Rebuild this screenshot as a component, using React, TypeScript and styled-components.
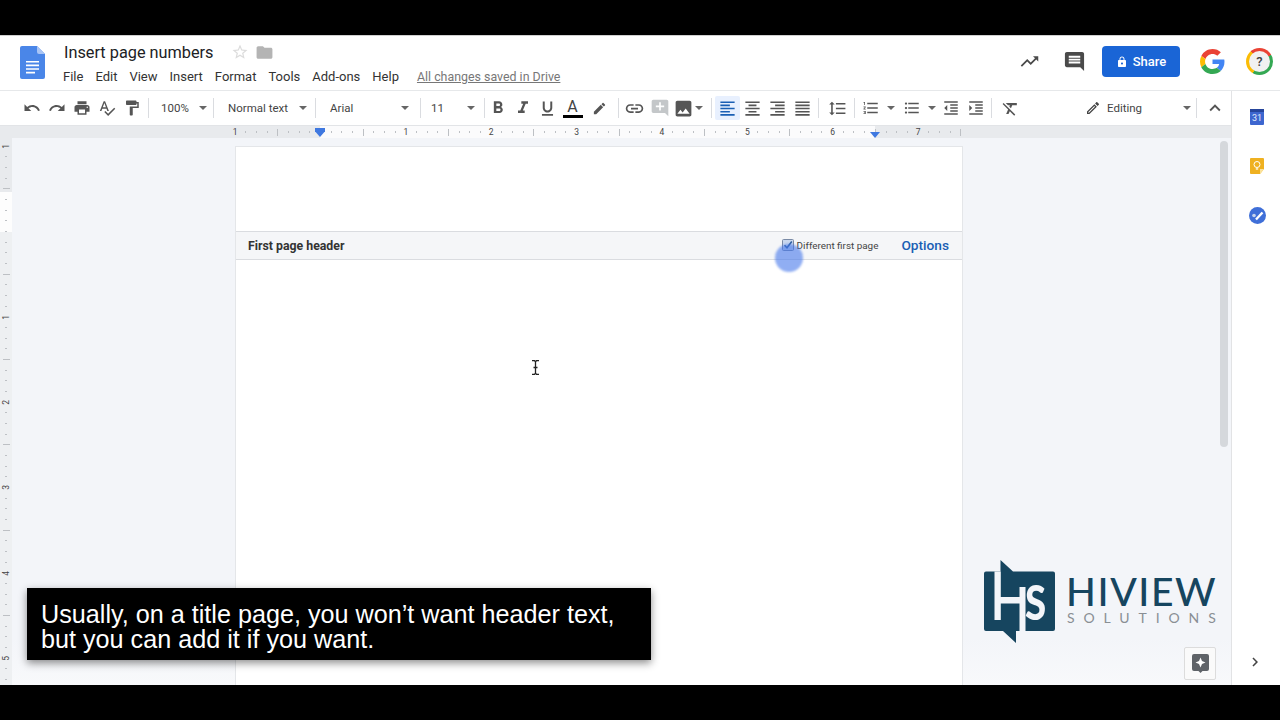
import React from "react";
import styled, { createGlobalStyle } from "styled-components";
import {
  MdUndo,
  MdRedo,
  MdPrint,
  MdSpellcheck,
  MdFormatPaint,
  MdFormatBold,
  MdFormatItalic,
  MdFormatUnderlined,
  MdEdit,
  MdLink,
  MdAddComment,
  MdImage,
  MdFormatAlignLeft,
  MdFormatAlignCenter,
  MdFormatAlignRight,
  MdFormatAlignJustify,
  MdFormatLineSpacing,
  MdFormatListNumbered,
  MdFormatListBulleted,
  MdFormatIndentDecrease,
  MdFormatIndentIncrease,
  MdFormatClear,
  MdOutlineEdit,
  MdKeyboardArrowUp,
  MdTrendingUp,
  MdComment,
  MdLock,
  MdStarBorder,
  MdFolder,
  MdChevronRight,
} from "react-icons/md";

const GlobalStyle = createGlobalStyle`
  html, body {
    margin: 0;
    padding: 0;
    background: #000;
    overflow: hidden;
  }
  * { box-sizing: border-box; }
`;

const CELL = 10.675;
const MENU = ["File", "Edit", "View", "Insert", "Format", "Tools", "Add-ons", "Help"];

function DocsIcon() {
  return (
    <svg width="25" height="33" viewBox="0 0 25 33">
      <path d="M2 0h15l8 8v23a2 2 0 0 1-2 2H2a2 2 0 0 1-2-2V2a2 2 0 0 1 2-2z" fill="#4a86e8" />
      <path d="M17 0l8 8h-6a2 2 0 0 1-2-2z" fill="#a9c5f5" />
      <path d="M6 15h13v1.6H6zM6 18.6h13v1.6H6zM6 22.2h13v1.6H6zM6 25.8h9v1.6H6z" fill="#fff" />
    </svg>
  );
}

function GoogleG() {
  return (
    <svg width="25" height="25" viewBox="0 0 48 48">
      <path fill="#EA4335" d="M24 9.5c3.5 0 6.7 1.2 9.2 3.6l6.9-6.9C35.9 2.4 30.5 0 24 0 14.6 0 6.5 5.4 2.6 13.2l8 6.2C12.4 13.7 17.7 9.5 24 9.5z" />
      <path fill="#4285F4" d="M47 24.5c0-1.6-.1-3.100-.4-4.500H24v9h12.900c-.6 3-2.200 5.500-4.700 7.200l7.700 6C44.400 37.600 47 31.600 47 24.500z" />
      <path fill="#FBBC05" d="M10.500 28.600c-.5-1.400-.8-3-.8-4.600s.3-3.200.8-4.600l-8-6.200C.9 16.500 0 20.100 0 24s.9 7.500 2.600 10.800l7.900-6.200z" />
      <path fill="#34A853" d="M24 48c6.500 0 11.900-2.100 15.900-5.800l-7.700-6c-2.100 1.400-4.900 2.300-8.200 2.300-6.300 0-11.600-4.200-13.500-9.900l-8 6.200C6.500 42.600 14.600 48 24 48z" />
    </svg>
  );
}

function LogoMark() {
  return (
    <svg width="72" height="84" viewBox="0 0 72 84">
      <path d="M2 11.500h14.500V0L29 11.500h40a2 2 0 0 1 2 2v55.500a2 2 0 0 1-2 2H32v12L19 71H2a2 2 0 0 1-2-2V13.500a2 2 0 0 1 2-2z" fill="#16455f" />
      <path d="M10.500 11.500h6.300v25.500h18.700V27h6v44h-6V43.500H16.800V60H10.500z" fill="#f3f5f9" />
    </svg>
  );
}

function ToolIcon({ icon: Icon, size = 18 }: { icon: React.ComponentType<{ size?: number }>; size?: number }) {
  return (
    <ToolBtn>
      <Icon size={size} />
    </ToolBtn>
  );
}

function Select({ label, width, pad, end }: { label: string; width: number; pad: number; end: number }) {
  return (
    <SelectBox $w={width} $pad={pad} $end={end}>
      <span>{label}</span>
      <Caret />
    </SelectBox>
  );
}

function HRuler() {
  const cells = Array.from({ length: 69 }, (_, i) => i);
  return (
    <RulerBar>
      <RulerCells>
        {cells.map((i) => {
          const n = i - 8;
          if (i === 8) return <HCell key={i} />;
          if (i % 8 === 0) return <HCell key={i}>{n === -8 ? 1 : n / 8}</HCell>;
          return (
            <HCell key={i}>
              <HTick $long={i % 8 === 4} />
            </HCell>
          );
        })}
      </RulerCells>
      <IndentLeft />
      <IndentRight />
    </RulerBar>
  );
}

function VRuler() {
  const labels: Record<number, number> = { 0: 1, 16: 1, 24: 2, 32: 3, 40: 4, 48: 5 };
  const cells = Array.from({ length: 52 }, (_, i) => i);
  return (
    <VRulerCol>
      <VHeaderGap />
      {cells.map((i) => (
        <VCell key={i}>
          {labels[i] ? <VDigit>{labels[i]}</VDigit> : <VTick $long={i % 8 === 4} />}
        </VCell>
      ))}
    </VRulerCol>
  );
}

export default function App() {
  return (
    <>
      <GlobalStyle />
      <Screen>
        <Letterbox />
        <Stage>
          <TitleBar>
            <DocsIcon />
            <TitleCol>
              <TitleRow>
                <DocTitle>Insert page numbers</DocTitle>
                <StarIcon><MdStarBorder size={18} /></StarIcon>
                <FolderIcon><MdFolder size={19} /></FolderIcon>
              </TitleRow>
              <MenuRow>
                {MENU.map((m) => (
                  <MenuItem key={m}>{m}</MenuItem>
                ))}
                <SaveStatus>All changes saved in Drive</SaveStatus>
              </MenuRow>
            </TitleCol>
            <TopRight>
              <TopIcon $mr={23}><MdTrendingUp size={21} /></TopIcon>
              <TopIcon $mr={16}><MdComment size={23} /></TopIcon>
              <ShareBtn>
                <MdLock size={12} />
                Share
              </ShareBtn>
              <GoogleSlot><GoogleG /></GoogleSlot>
              <HelpRing><HelpInner>?</HelpInner></HelpRing>
            </TopRight>
          </TitleBar>

          <Body>
            <Work>
              <Toolbar>
                <ToolIcon icon={MdUndo} />
                <ToolIcon icon={MdRedo} />
                <ToolIcon icon={MdPrint} />
                <ToolIcon icon={MdSpellcheck} />
                <ToolIcon icon={MdFormatPaint} />
                <Sep $l={4} />
                <Select label="100%" width={58} pad={9} end={3} />
                <Sep />
                <Select label="Normal text" width={95} pad={11} end={5} />
                <Sep />
                <Select label="Arial" width={98} pad={11} end={8} />
                <Sep />
                <Select label="11" width={57} pad={7} end={6} />
                <Sep $r={0} />
                <ToolBtn><MdFormatBold size={20} /></ToolBtn>
                <ToolIcon icon={MdFormatItalic} size={20} />
                <ToolIcon icon={MdFormatUnderlined} size={19} />
                <ToolBtn><ColorA>A</ColorA></ToolBtn>
                <ToolBtn $ml={2}><MdEdit size={15} /></ToolBtn>
                <Sep $l={6} />
                <ToolIcon icon={MdLink} size={21} />
                <ToolBtn $faded><MdAddComment size={20} /></ToolBtn>
                <ToolBtn $w={23}><MdImage size={21} /></ToolBtn>
                <Caret />
                <Sep $l={8} />
                <ToolBtn $active><MdFormatAlignLeft size={19} /></ToolBtn>
                <ToolIcon icon={MdFormatAlignCenter} size={19} />
                <ToolIcon icon={MdFormatAlignRight} size={19} />
                <ToolIcon icon={MdFormatAlignJustify} size={19} />
                <Sep />
                <ToolBtn $w={30}><MdFormatLineSpacing size={19} /></ToolBtn>
                <Sep $l={2} />
                <ToolIcon icon={MdFormatListNumbered} size={18} />
                <Caret $ml={4} />
                <ToolBtn $ml={4}><MdFormatListBulleted size={18} /></ToolBtn>
                <Caret $ml={4} />
                <ToolBtn $ml={3} $w={24}><MdFormatIndentDecrease size={18} /></ToolBtn>
                <ToolIcon icon={MdFormatIndentIncrease} size={18} />
                <Sep />
                <ToolBtn $w={30}><MdFormatClear size={19} /></ToolBtn>
                <ModeBox>
                  <MdOutlineEdit size={16} />
                  <span>Editing</span>
                  <Caret />
                </ModeBox>
                <Sep />
                <ToolBtn $w={30}><MdKeyboardArrowUp size={22} /></ToolBtn>
              </Toolbar>
              <HRuler />
              <Canvas>
                <VRuler />
                <Page>
                  <HeaderSpace />
                  <HeaderBar>
                    <HeaderLabel>First page header</HeaderLabel>
                    <CheckLabel>
                      <CheckBox viewBox="0 0 12 12">
                        <rect x="0.5" y="0.5" width="11" height="11" rx="1" fill="#c9d7ee" stroke="#7a8aa5" />
                        <path d="M2.500 6.200l2.500 2.600 4.800-6.300" fill="none" stroke="#2f5f9f" strokeWidth="1.600" />
                      </CheckBox>
                      Different first page
                    </CheckLabel>
                    <OptionsLink>Options</OptionsLink>
                  </HeaderBar>
                </Page>
                <ScrollThumb />
                <ClickDot />
                <IBeam>
                  <svg width="7" height="15" viewBox="0 0 7 15">
                    <path d="M0 .7h2.500L3.500 1.700 4.500.7H7M3.500 1.700v11.600M0 14.300h2.500l1-1 1 1H7M1.500 7.500h4" fill="none" stroke="#222" strokeWidth="1.300" />
                  </svg>
                </IBeam>
                <ExploreBtn>
                  <svg width="17" height="19" viewBox="0 0 17 19">
                    <path d="M2 0h13a2 2 0 0 1 2 2v13a2 2 0 0 1-2 2h-4.500L8.500 19l-2-2H2a2 2 0 0 1-2-2V2a2 2 0 0 1 2-2z" fill="#5f6368" />
                    <path d="M8.500 3.500l1.500 3.500 3.500 1.500-3.500 1.500-1.500 3.500L7 10 3.500 8.500 7 7z" fill="#fff" />
                  </svg>
                </ExploreBtn>
              </Canvas>
            </Work>
            <SidePanel>
              <SideApps>
                <CalendarIcon>
                  <CalendarTop />
                  <CalendarDay>31</CalendarDay>
                </CalendarIcon>
                <svg width="14" height="16" viewBox="0 0 14 16">
                  <path d="M1 0h12a1 1 0 0 1 1 1v10l-4 5H1a1 1 0 0 1-1-1V1a1 1 0 0 1 1-1z" fill="#efb121" />
                  <path d="M10 16v-5h4z" fill="#fbe29a" />
                  <circle cx="7" cy="6.500" r="3" fill="none" stroke="#fff" strokeWidth="1" />
                  <path d="M5.800 10.300h2.400v1.300H5.800z" fill="#fff" />
                </svg>
                <svg width="17" height="17" viewBox="0 0 17 17">
                  <circle cx="8.500" cy="8.500" r="8.500" fill="#3f6fd8" />
                  <path d="M7 12.500l6.500-7" stroke="#fff" strokeWidth="2.400" />
                  <circle cx="5" cy="8.500" r="1.800" fill="#c6d3ea" />
                </svg>
              </SideApps>
              <SideToggle><MdChevronRight size={18} /></SideToggle>
            </SidePanel>
          </Body>

          <Caption>
            Usually, on a title page, you won’t want header text,
            <br />
            but you can add it if you want.
          </Caption>
          <Brand>
            <LogoWrap>
              <LogoMark />
              <LogoS>S</LogoS>
            </LogoWrap>
            <BrandText>
              <BrandName>HIVIEW</BrandName>
              <BrandSub>SOLUTIONS</BrandSub>
            </BrandText>
          </Brand>
        </Stage>
        <Letterbox />
      </Screen>
    </>
  );
}

const Screen = styled.div`
  width: 1280px;
  height: 720px;
  display: flex;
  flex-direction: column;
  background: #000;
  font-family: Roboto, "Liberation Sans", sans-serif;
  overflow: hidden;
`;

const Letterbox = styled.div`
  height: 35px;
  flex: none;
  background: #000;
`;

const Stage = styled.div`
  position: relative;
  height: 650px;
  display: flex;
  flex-direction: column;
  background: #fff;
  overflow: hidden;
`;

const TitleBar = styled.header`
  height: 56px;
  flex: none;
  display: flex;
  align-items: flex-start;
  padding: 10px 0 0 20px;
  border-top: 1px solid #cfcfcf;
  border-bottom: 1px solid #e6e8ea;
  background: #fff;
`;

const TitleCol = styled.div`
  display: flex;
  flex-direction: column;
  margin-left: 18px;
  margin-top: -5px;
`;

const TitleRow = styled.div`
  display: flex;
  align-items: center;
  height: 22px;
`;

const DocTitle = styled.div`
  font-size: 16.300px;
  color: #202124;
  margin-left: 1px;
`;

const StarIcon = styled.span`
  display: flex;
  margin-left: 17px;
  color: #dcdcdc;
`;

const FolderIcon = styled.span`
  display: flex;
  margin-left: 6px;
  color: #b4b4b4;
`;

const MenuRow = styled.nav`
  display: flex;
  align-items: center;
  height: 20px;
  margin-top: 3px;
  gap: 12px;
`;

const MenuItem = styled.span`
  font-size: 13px;
  color: #333;
`;

const SaveStatus = styled.span`
  margin-left: 6px;
  font-size: 12.400px;
  color: #777;
  text-decoration: underline;
`;

const TopRight = styled.div`
  margin-left: auto;
  display: flex;
  align-items: center;
  height: 31px;
`;

const TopIcon = styled.span<{ $mr: number }>`
  display: flex;
  margin-right: ${(p) => p.$mr}px;
  color: #4a4a4a;
`;

const ShareBtn = styled.button`
  width: 78px;
  height: 31px;
  display: flex;
  align-items: center;
  justify-content: center;
  gap: 5px;
  border: none;
  border-radius: 4px;
  background: #1a65d6;
  color: #fff;
  font-family: Roboto, sans-serif;
  font-size: 13px;
  font-weight: 500;
`;

const GoogleSlot = styled.span`
  display: flex;
  margin-left: 20px;
`;

const HelpRing = styled.div`
  width: 27px;
  height: 27px;
  margin-left: 21px;
  margin-right: 7px;
  border-radius: 50%;
  display: flex;
  align-items: center;
  justify-content: center;
  background: conic-gradient(#ea4335 0 60deg, #34a853 60deg 210deg, #fbbc05 210deg 320deg, #ea4335 320deg 360deg);
`;

const HelpInner = styled.div`
  width: 21px;
  height: 21px;
  border-radius: 50%;
  background: #f1f1f1;
  display: flex;
  align-items: center;
  justify-content: center;
  font-size: 13px;
  font-weight: 500;
  color: #444;
`;

const Body = styled.div`
  flex: 1;
  min-height: 0;
  display: flex;
`;

const Work = styled.div`
  flex: 1;
  min-width: 0;
  display: flex;
  flex-direction: column;
`;

const Toolbar = styled.div`
  height: 34px;
  flex: none;
  display: flex;
  align-items: center;
  padding-left: 19px;
  background: #fff;
  color: #555;
`;

const ToolBtn = styled.span<{ $w?: number; $ml?: number; $active?: boolean; $faded?: boolean }>`
  width: ${(p) => p.$w ?? 25}px;
  height: 24px;
  margin-left: ${(p) => p.$ml ?? 0}px;
  flex: none;
  display: flex;
  align-items: center;
  justify-content: center;
  border-radius: 2px;
  background: ${(p) => (p.$active ? "#e8f0fe" : "transparent")};
  color: ${(p) => (p.$active ? "#1a5fb4" : p.$faded ? "#c4c7c9" : "#555")};
`;

const Sep = styled.span<{ $l?: number; $r?: number }>`
  width: 1px;
  height: 20px;
  flex: none;
  margin-left: ${(p) => p.$l ?? 3}px;
  margin-right: ${(p) => p.$r ?? 3}px;
  background: #dadce0;
`;

const SelectBox = styled.div<{ $w: number; $pad: number; $end: number }>`
  width: ${(p) => p.$w}px;
  padding-left: ${(p) => p.$pad}px;
  padding-right: ${(p) => p.$end}px;
  flex: none;
  display: flex;
  align-items: center;
  justify-content: space-between;
  font-size: 11.500px;
  color: #444;
`;

const Caret = styled.i<{ $ml?: number }>`
  width: 0;
  height: 0;
  flex: none;
  margin-left: ${(p) => p.$ml ?? 0}px;
  border-left: 4px solid transparent;
  border-right: 4px solid transparent;
  border-top: 4px solid #666;
`;

const ColorA = styled.span`
  width: 20px;
  display: block;
  text-align: center;
  font-size: 16px;
  line-height: 17px;
  color: #444;
  border-bottom: 3px solid #000;
`;

const ModeBox = styled.div`
  width: 108px;
  margin-left: 60px;
  flex: none;
  display: flex;
  align-items: center;
  gap: 6px;
  font-size: 11.500px;
  color: #444;

  i {
    margin-left: auto;
    margin-right: 2px;
  }
`;

const RulerBar = styled.div`
  position: relative;
  height: 13px;
  flex: none;
  overflow: hidden;
  border-top: 1px solid #e2e4e7;
  background: linear-gradient(to right, #e8eaed 320px, #fbfbfc 320px, #fbfbfc 875px, #e8eaed 875px);
`;

const RulerCells = styled.div`
  height: 100%;
  display: flex;
  padding-left: 229.700px;
`;

const HCell = styled.span`
  width: ${CELL}px;
  flex: none;
  display: flex;
  align-items: center;
  justify-content: center;
  font-size: 8.500px;
  color: #444;
`;

const HTick = styled.i<{ $long: boolean }>`
  width: 1px;
  height: ${(p) => (p.$long ? 7 : 2)}px;
  background: #bdc0c4;
`;

const IndentLeft = styled.i`
  position: absolute;
  left: 315px;
  top: 2px;
  width: 10px;
  height: 9px;
  background: #3f78e0;
  clip-path: polygon(0 0, 100% 0, 100% 35%, 50% 100%, 0 35%);
`;

const IndentRight = styled.i`
  position: absolute;
  left: 870px;
  top: 6px;
  width: 0;
  height: 0;
  border-left: 5px solid transparent;
  border-right: 5px solid transparent;
  border-top: 6px solid #3f78e0;
`;

const Canvas = styled.div`
  position: relative;
  flex: 1;
  min-height: 0;
  display: flex;
  align-items: flex-start;
  overflow: hidden;
  background: linear-gradient(to bottom, #f3f5f9 0, #f3f5f9 500px, #f8f9fb 547px);
`;

const VRulerCol = styled.div`
  width: 12px;
  height: 100%;
  flex: none;
  overflow: hidden;
  background: linear-gradient(to bottom, #e8eaed 54px, #fdfdfd 54px, #fdfdfd 94px, #eef0f2 94px);
`;

const VHeaderGap = styled.div`
  height: 2.700px;
`;

const VCell = styled.div`
  height: ${CELL}px;
  display: flex;
  align-items: center;
  justify-content: center;
`;

const VDigit = styled.span`
  font-size: 8.500px;
  line-height: 1;
  color: #444;
  transform: rotate(-90deg);
`;

const VTick = styled.i<{ $long: boolean }>`
  height: 1px;
  width: ${(p) => (p.$long ? 7 : 2)}px;
  background: #bdc0c4;
`;

const Page = styled.div`
  width: 726px;
  height: 700px;
  flex: none;
  margin-left: 224px;
  margin-top: 9px;
  background: #fff;
  box-shadow: 0 0 0 1px #e4e6e9;
`;

const HeaderSpace = styled.div`
  height: 84px;
`;

const HeaderBar = styled.div`
  height: 29px;
  display: flex;
  align-items: center;
  padding: 0 13px 0 12px;
  background: #f5f6f8;
  border-top: 1px solid #dadce0;
  border-bottom: 1px solid #dadce0;
`;

const HeaderLabel = styled.span`
  font-size: 12.300px;
  font-weight: 700;
  color: #333;
`;

const CheckLabel = styled.label`
  margin-left: auto;
  margin-bottom: 1px;
  display: flex;
  align-items: center;
  gap: 3px;
  font-size: 9.900px;
  color: #444;
`;

const CheckBox = styled.svg`
  width: 12px;
  height: 12px;
`;

const OptionsLink = styled.span`
  margin-left: 23px;
  margin-bottom: 1px;
  font-size: 13.700px;
  font-weight: 500;
  color: #1a5fb4;
`;

const ScrollThumb = styled.div`
  position: absolute;
  left: 1220px;
  top: 3px;
  width: 8px;
  height: 306px;
  border-radius: 4px;
  background: #d5d8dc;
`;

const ClickDot = styled.div`
  position: absolute;
  left: 775px;
  top: 106px;
  width: 28px;
  height: 28px;
  border-radius: 50%;
  background: rgba(70, 120, 235, 0.6);
  filter: blur(1px);
`;

const IBeam = styled.span`
  position: absolute;
  left: 532px;
  top: 222px;
  display: flex;
`;

const ExploreBtn = styled.div`
  position: absolute;
  left: 1184px;
  top: 509px;
  width: 32px;
  height: 33px;
  display: flex;
  align-items: center;
  justify-content: center;
  background: #fafafa;
  border: 1px solid #dcdcdc;
  border-radius: 2px;
`;

const SidePanel = styled.aside`
  width: 49px;
  flex: none;
  display: flex;
  flex-direction: column;
  align-items: center;
  border-left: 1px solid #e2e3e5;
  background: #fff;
  padding: 18px 0 14px 2px;
`;

const SideApps = styled.div`
  display: flex;
  flex-direction: column;
  align-items: center;
  gap: 33px;
`;

const CalendarIcon = styled.div`
  width: 14px;
  height: 16px;
  display: flex;
  flex-direction: column;
  background: #3d66cf;
  border-radius: 1px;
`;

const CalendarTop = styled.div`
  height: 3px;
  background: #26459b;
`;

const CalendarDay = styled.div`
  font-size: 9px;
  line-height: 13px;
  text-align: center;
  color: #e4ebfb;
`;

const SideToggle = styled.span`
  display: flex;
  margin-top: auto;
  margin-left: -5px;
  color: #444;
`;

const Caption = styled.div`
  position: absolute;
  left: 27px;
  top: 553px;
  width: 624px;
  height: 72px;
  padding: 14px 0 0 14px;
  background: #000;
  color: #fff;
  font-family: "Liberation Sans", Arial, sans-serif;
  font-size: 25.200px;
  line-height: 25px;
  box-shadow: 0 3px 8px rgba(0, 0, 0, 0.45);
`;

const Brand = styled.div`
  position: absolute;
  left: 984px;
  top: 525px;
  display: flex;
  align-items: flex-start;
  gap: 10px;
`;

const LogoWrap = styled.div`
  position: relative;
  height: 84px;
  display: flex;
`;

const LogoS = styled.span`
  position: absolute;
  left: 41px;
  top: 20px;
  font-family: Lato, "Open Sans", sans-serif;
  font-weight: 900;
  font-size: 48px;
  line-height: 44px;
  color: #f3f5f9;
  transform: scaleX(0.8);
  transform-origin: left center;
`;

const BrandText = styled.div`
  display: flex;
  flex-direction: column;
  padding-top: 14px;
`;

const BrandName = styled.div`
  font-family: Lato, "Open Sans", sans-serif;
  font-size: 39px;
  line-height: 34px;
  font-weight: 500;
  letter-spacing: 1.600px;
  color: #16455f;
`;

const BrandSub = styled.div`
  margin-top: 2px;
  margin-left: 1px;
  font-family: Lato, "Open Sans", sans-serif;
  font-size: 14px;
  line-height: 16px;
  letter-spacing: 8.900px;
  color: #8a8f94;
`;
